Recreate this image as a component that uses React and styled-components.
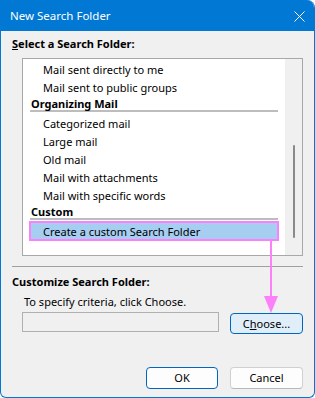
import React from "react";
import styled, { createGlobalStyle } from "styled-components";

const Global = createGlobalStyle`
  html, body { margin: 0; padding: 0; background: #ffffff; }
  body { font-family: "Noto Sans", "Open Sans", sans-serif; font-size: 11px; color: #000; }
  * { box-sizing: border-box; }
`;

const Window = styled.div`
  position: relative;
  width: 315px;
  height: 398px;
  background: #f0f0f0;
  border: 1px solid #0078d4;
  border-top: none;
  border-radius: 0 8px 6px 6px;
  overflow: hidden;
  display: flex;
  flex-direction: column;
`;

const TitleBar = styled.div`
  height: 31px;
  background: #0078d4;
  color: #fff;
  display: flex;
  align-items: center;
  justify-content: space-between;
  padding: 1px 9px 0 9px;
  font-size: 11.5px;
  flex-shrink: 0;
`;

const TitleText = styled.span`
  line-height: 16px;
`;

const CloseBox = styled.span`
  display: flex;
  width: 12px;
  height: 12px;
  align-items: center;
  justify-content: center;
`;

const Content = styled.div`
  padding: 0 11px;
  display: flex;
  flex-direction: column;
`;

const GroupLabel = styled.div`
  font-weight: 700;
  line-height: 16px;
  margin-top: ${(p) => p.$mt}px;
`;

const ListBox = styled.div`
  margin-top: 6px;
  margin-left: 10px;
  width: 281px;
  height: 198px;
  background: #fff;
  border: 1px solid #a8a8a8;
  display: flex;
  overflow: hidden;
`;

const ListItems = styled.div`
  flex: 1;
  padding-top: 1px;
  display: flex;
  flex-direction: column;
`;

const Item = styled.div`
  height: 18px;
  line-height: 19px;
  padding-left: 20px;
  white-space: nowrap;
`;

const Header = styled.div`
  margin: 0 7px ${(p) => p.$mb}px 7px;
  font-weight: 700;
  line-height: 15px;
  height: 16px;
  padding-left: 1px;
  border-bottom: 2px solid #bdbdbd;
`;

const Selected = styled.div`
  margin: 0 6px;
  height: 20px;
  line-height: 17px;
  padding-left: 12px;
  background: #a6cef0;
  border: 2px solid #fd80fb;
  white-space: nowrap;
`;

const ScrollTrack = styled.div`
  width: 17px;
  background: #f0f0f0;
  display: flex;
  justify-content: center;
  padding-top: 86px;
`;

const ScrollThumb = styled.div`
  width: 2px;
  height: 93px;
  border-radius: 1px;
  background: #8a8a8a;
`;

const Divider = styled.div`
  margin-top: 10px;
  height: 1px;
  background: #a0a0a0;
  width: 291px;
`;

const Hint = styled.div`
  margin-top: 4px;
  padding-left: 12px;
  line-height: 16px;
`;

const ChooseRow = styled.div`
  margin-top: 2px;
  padding-left: 10px;
  display: flex;
  align-items: flex-start;
  gap: 11px;
`;

const TextField = styled.div`
  width: 197px;
  height: 20px;
  border: 1px solid #b0b0b0;
  background: #f0f0f0;
`;

const Button = styled.button`
  font-family: inherit;
  font-size: 11px;
  color: #000;
  width: ${(p) => p.$w}px;
  height: ${(p) => p.$h}px;
  margin-top: ${(p) => p.$mt || 0}px;
  padding: 0;
  border-radius: 4px;
  border: 1px solid ${(p) => (p.$primary ? "#0067c0" : "#d0d0d0")};
  border-bottom-color: ${(p) => (p.$primary ? "#0067c0" : "#b8b8b8")};
  background: ${(p) => (p.$tint ? "#e0eef9" : "#fdfdfd")};
  line-height: 18px;
`;

const Footer = styled.div`
  margin-top: auto;
  margin-bottom: 8px;
  padding-right: 11px;
  display: flex;
  justify-content: flex-end;
  gap: 12px;
`;

const Arrow = styled.svg`
  position: absolute;
  left: 262px;
  top: 240px;
`;

export default function App() {
  return (
    <>
      <Global />
      <Window>
        <TitleBar>
          <TitleText>New Search Folder</TitleText>
          <CloseBox>
            <svg width="11" height="11" viewBox="0 0 11 11">
              <path d="M0.5 0.5 L10.5 10.5 M10.5 0.5 L0.5 10.5" stroke="#fff" strokeWidth="1" />
            </svg>
          </CloseBox>
        </TitleBar>
        <Content>
          <GroupLabel $mt={5}>
            <u>S</u>elect a Search Folder:
          </GroupLabel>
          <ListBox>
            <ListItems>
              <Item>Mail sent directly to me</Item>
              <Item>Mail sent to public groups</Item>
              <Header $mb={2}>Organizing Mail</Header>
              <Item>Categorized mail</Item>
              <Item>Large mail</Item>
              <Item>Old mail</Item>
              <Item>Mail with attachments</Item>
              <Item>Mail with specific words</Item>
              <Header $mb={1}>Custom</Header>
              <Selected>Create a custom Search Folder</Selected>
            </ListItems>
            <ScrollTrack>
              <ScrollThumb />
            </ScrollTrack>
          </ListBox>
          <Divider />
          <GroupLabel $mt={7}>Customize Search Folder:</GroupLabel>
          <Hint>To specify criteria, click Choose.</Hint>
          <ChooseRow>
            <TextField />
            <Button $w={73} $h={21} $mt={1} $primary $tint>
              C<u>h</u>oose...
            </Button>
          </ChooseRow>
        </Content>
        <Footer>
          <Button $w={72} $h={22} $primary>OK</Button>
          <Button $w={73} $h={22}>Cancel</Button>
        </Footer>
        <Arrow width="16" height="74" viewBox="0 0 16 74">
          <path d="M8 0 L8 58" stroke="#fd80fb" strokeWidth="2" />
          <path d="M1 56 L15 56 L8 73 Z" fill="#fd80fb" />
        </Arrow>
      </Window>
    </>
  );
}
